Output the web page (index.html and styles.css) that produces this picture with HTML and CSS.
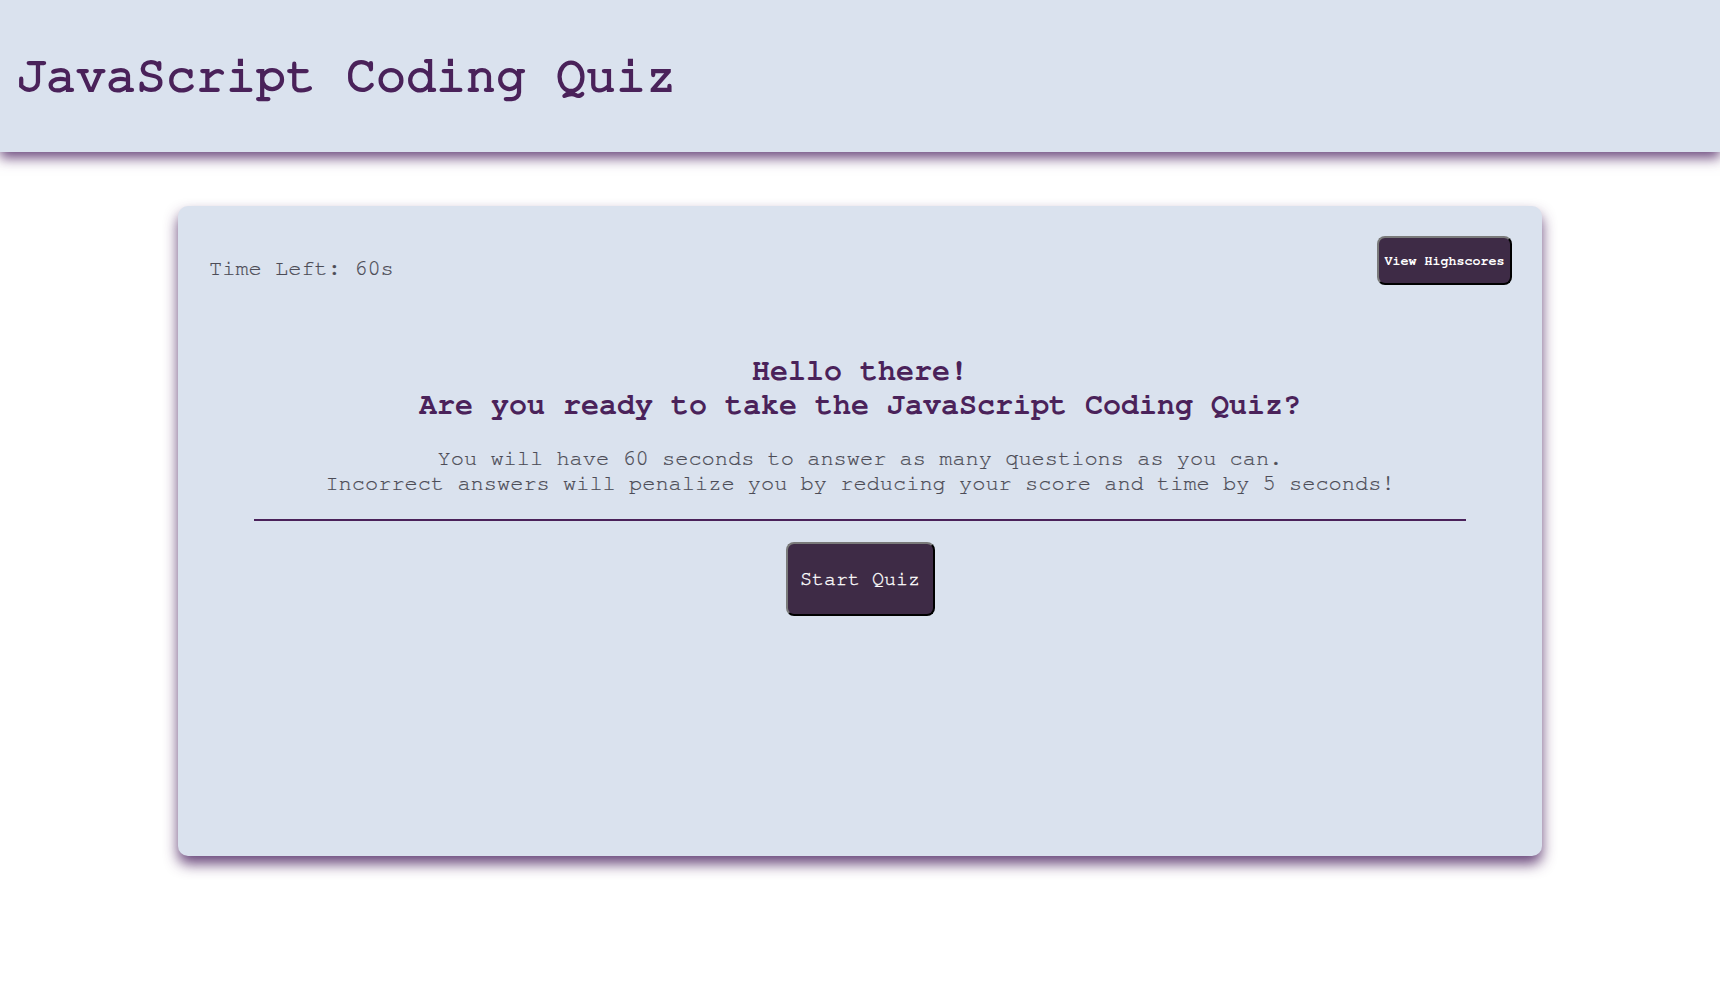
FILE: index.html
```html
<!DOCTYPE html>
<html lang="en">
<head>
<meta charset="utf-8">
<title>JavaScript Coding Quiz</title>
<link rel="stylesheet" href="styles.css">
</head>
<body>
<header class="site-header">
  <h1 class="site-title">JavaScript Coding Quiz</h1>
</header>
<main class="quiz-card">
  <div class="top-row">
    <p class="timer">Time Left: 60s</p>
    <button class="btn btn-small">View Highscores</button>
  </div>
  <section class="intro">
    <h2 class="intro-title">Hello there!<br>Are you ready to take the JavaScript Coding Quiz?</h2>
    <p class="intro-text">You will have 60 seconds to answer as many questions as you can.<br>Incorrect answers will penalize you by reducing your score and time by 5 seconds!</p>
    <hr class="divider">
    <button class="btn btn-start">Start Quiz</button>
  </section>
</main>
</body>
</html>
```
FILE: styles.css
```css
* { box-sizing: border-box; }
html, body {
  margin: 0;
  padding: 0;
  background: #ffffff;
  font-family: "Nimbus Mono PS", "Nimbus Mono L", "FreeMono", "Courier New", Courier, "Liberation Mono", monospace;
}
body {
  min-height: 991px;
  padding-bottom: 60px;
}
.site-header {
  height: 152px;
  background: #dae2ee;
  display: flex;
  align-items: center;
  padding-left: 16px;
  box-shadow: 0 6px 12px rgba(85, 45, 105, 0.85);
}
.site-title {
  margin: 0;
  font-size: 50px;
  font-weight: normal;
  color: #4a225a;
  -webkit-text-stroke: 2.2px #4a225a;
  paint-order: stroke fill;
}
.quiz-card {
  width: 1364px;
  margin: 54px auto 0;
  height: 650px;
  background: #dae2ee;
  border-radius: 10px;
  padding: 30px;
  box-shadow: 0 8px 14px rgba(80, 40, 100, 0.85);
}
.top-row {
  display: flex;
  justify-content: space-between;
  align-items: flex-start;
}
.timer {
  margin: 21px 0 0 1px;
  font-size: 22px;
  color: #4c4c56;
  -webkit-text-stroke: 0.2px #4c4c56;
}
.btn {
  font-family: inherit;
  background: #3e2b46;
  color: #ffffff;
  border: 2px outset #767676;
  border-color: #7a7a7a #222 #222 #7a7a7a;
  border-radius: 8px;
  cursor: pointer;
}
.btn-small {
  font-size: 13.33px;
  font-weight: bold;
  width: 135px;
  height: 49px;
  padding: 0;
}
.intro {
  text-align: center;
  padding-top: 69px;
}
.intro-title {
  margin: 0;
  font-size: 30px;
  line-height: 34px;
  font-weight: bold;
  color: #4a225a;
}
.intro-text {
  margin: 24px 0 0;
  font-size: 22px;
  line-height: 25px;
  color: #4c4c56;
  -webkit-text-stroke: 0.2px #4c4c56;
}
.divider {
  margin: 23px 46px 0;
  border: 0;
  height: 2px;
  background: #4a225a;
}
.btn-start {
  margin-top: 21px;
  font-size: 20px;
  width: 149px;
  height: 74px;
  padding: 0;
  -webkit-text-stroke: 0.3px #ffffff;
}
```
